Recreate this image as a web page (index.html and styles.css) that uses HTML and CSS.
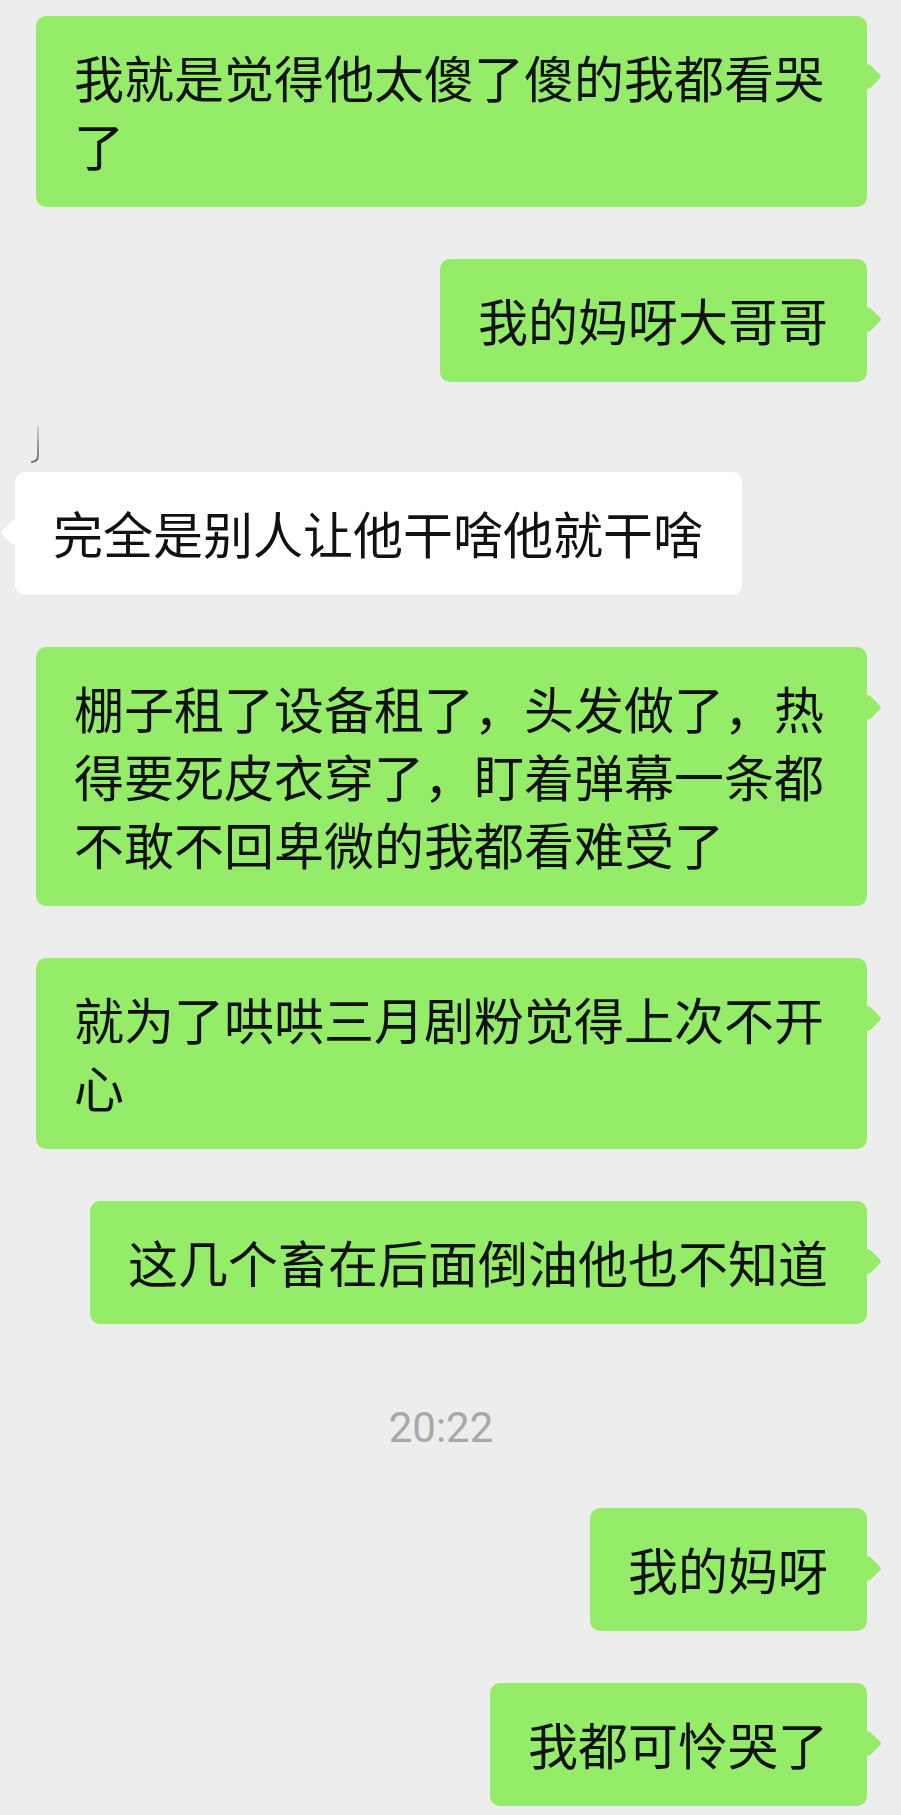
FILE: index.html
```html
<!DOCTYPE html>
<html lang="zh-CN">
<head>
    <meta charset="UTF-8">
    <meta name="viewport" content="width=device-width, initial-scale=1.0">
    <title>聊天记录</title>
    <link rel="stylesheet" href="styles.css">
</head>
<body>

    <div class="chat">
        <div class="bubble out">我就是觉得他太傻了傻的我都看哭了</div>
        <div class="bubble out">我的妈呀大哥哥</div>

        <!-- Incoming message (avatar edge cut off above it) -->
        <div class="incoming">
            <svg class="avatar-edge" width="40" height="47" viewBox="0 0 40 47">
                <defs>
                    <linearGradient id="edgeFade" x1="0" y1="0" x2="0" y2="1">
                        <stop offset="0" stop-color="#cfcfcf"/>
                        <stop offset="1" stop-color="#6e6e6e"/>
                    </linearGradient>
                </defs>
                <path d="M24 1 L24 31 Q24 36 18 37" fill="none" stroke="url(#edgeFade)" stroke-width="2" stroke-linecap="round"/>
            </svg>
            <div class="bubble in">完全是别人让他干啥他就干啥</div>
        </div>

        <div class="bubble out">棚子租了设备租了，头发做了，热得要死皮衣穿了，盯着弹幕一条都不敢不回卑微的我都看难受了</div>
        <div class="bubble out">就为了哄哄三月剧粉觉得上次不开心</div>
        <div class="bubble out">这几个畜在后面倒油他也不知道</div>

        <div class="time">20:22</div>

        <div class="bubble out">我的妈呀</div>
        <div class="bubble out">我都可怜哭了</div>
    </div>

</body>
</html>
```

FILE: styles.css
```css
body {
    margin: 0;
    padding: 0;
    background-color: #ededed;
    font-family: "Noto Sans CJK SC", "Noto Sans", sans-serif;
}

.chat {
    display: flex;
    flex-direction: column;
    gap: 52px;
    padding: 16px 34px 12px 15px;
}

.bubble {
    position: relative;
    box-sizing: border-box;
    max-width: 831px;
    padding: 25.5px 39px 29.5px 38px;
    border-radius: 10px;
    font-size: 50px;
    line-height: 68px;
    color: #111;
    word-break: break-all;
}

/* Tail */
.bubble::after {
    content: "";
    position: absolute;
    top: 51px;
    width: 19px;
    height: 19px;
    border-radius: 3px;
    transform: rotate(45deg);
}

.out {
    align-self: flex-end;
    background-color: #95ec69;
}

.out::after {
    right: -11px;
    background-color: #95ec69;
}

.incoming {
    align-self: flex-start;
    display: flex;
    flex-direction: column;
    margin-top: -9px;
}

.avatar-edge {
    display: block;
    margin-left: -1px;
}

.in {
    background-color: #ffffff;
}

.in::after {
    left: -11px;
    background-color: #ffffff;
}

.time {
    align-self: center;
    margin: 27px 0 3px;
    font-family: Roboto, "Noto Sans", sans-serif;
    font-size: 42px;
    line-height: 50px;
    color: #a8a8a8;
}
```
